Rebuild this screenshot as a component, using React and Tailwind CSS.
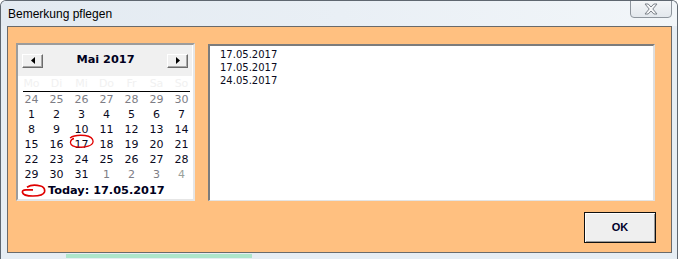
import React from 'react';

const WEEKDAYS = ['Mo', 'Di', 'Mi', 'Do', 'Fr', 'Sa', 'So'];

// 6 weeks shown, May 2017 starts on a Monday (prev month tail 24..30)
const WEEKS = [
  [24, 25, 26, 27, 28, 29, 30].map((d) => ({ d, other: true })),
  [1, 2, 3, 4, 5, 6, 7].map((d) => ({ d })),
  [8, 9, 10, 11, 12, 13, 14].map((d) => ({ d })),
  [15, 16, 17, 18, 19, 20, 21].map((d) => ({ d })),
  [22, 23, 24, 25, 26, 27, 28].map((d) => ({ d })),
  [
    { d: 29 }, { d: 30 }, { d: 31 },
    { d: 1, other: true }, { d: 2, other: true }, { d: 3, other: true }, { d: 4, other: true, light: true },
  ],
];

const ENTRIES = ['17.05.2017', '17.05.2017', '24.05.2017'];

const FONT_UI = { fontFamily: '"Liberation Sans", Arial, sans-serif' };
const FONT_CAL = { fontFamily: '"DejaVu Sans", Verdana, sans-serif' };

function NavButton({ dir }) {
  return (
    <button className="w-[21px] h-[14px] flex items-center justify-center bg-[#f0f0f0] border border-t-white border-l-white border-b-[#6b6b6b] border-r-[#6b6b6b] shadow-[inset_-1px_-1px_0_#a8a8a8]">
      <svg width="4" height="7" viewBox="0 0 4 7">
        {dir === 'left' ? <path d="M4 0 L0 3.5 L4 7 Z" fill="#000" /> : <path d="M0 0 L4 3.5 L0 7 Z" fill="#000" />}
      </svg>
    </button>
  );
}

function Calendar() {
  return (
    <div className="w-[179px] h-[158px] bg-white border-2 border-t-[#9c9c9c] border-l-[#9c9c9c] border-b-[#e6e6e6] border-r-[#e6e6e6] flex flex-col" style={FONT_CAL}>
      <div className="h-[31px] mr-[1px] bg-[#f0f0f0] flex items-center justify-between px-[4px]">
        <NavButton dir="left" />
        <span className="text-[11.3px] font-bold text-[#000020] ml-[1px]">Mai 2017</span>
        <NavButton dir="right" />
      </div>

      <div className="grid grid-cols-7 w-[175px] ml-[1px] h-[15px] items-center text-[11px] text-[#f1f1f1] leading-none">
        {WEEKDAYS.map((w) => (
          <span key={w} className="text-center">{w}</span>
        ))}
      </div>
      <div className="h-px bg-black ml-[5px] mr-[3px]" />

      <div className="flex flex-col w-[175px] ml-[1px]">
        {WEEKS.map((week, i) => (
          <div key={i} className="grid grid-cols-7 h-[15px] items-center text-[11px] leading-none">
            {week.map((c, j) => (
              <span
                key={j}
                className={`relative text-center ${c.light ? 'text-[#9aa09a]' : c.other ? 'text-[#7d7d85]' : 'text-[#0a0a1e]'}`}
              >
                {c.d}
                {!c.other && c.d === 17 && (
                  <svg className="absolute left-[-1px] top-[-5px]" width="27" height="15" viewBox="0 0 27 15">
                    <path
                      d="M2 4 C6 1 12 1 17 1.5 C22 2 25.5 4.5 25 8 C24.5 12 17 13.5 12 13.2 C6 13 2 11.5 2.5 8 C2.8 6 4 5 6 4.5"
                      fill="none"
                      stroke="#e00000"
                      strokeWidth="1.3"
                    />
                  </svg>
                )}
              </span>
            ))}
          </div>
        ))}
      </div>

      <div className="flex items-center h-[17px] pl-[3px] gap-[2px]">
        <svg width="25" height="13" viewBox="0 0 25 13">
          <path
            d="M6 3.2 C9 1.2 15 0.8 19.5 2 C23 3 24 5.5 23.5 8 C22.5 11 17 12 12 12 C6 12 2 11 1.5 8.5 C1.2 7 2 6 5 5.8 L12 5.8"
            fill="none"
            stroke="#e00000"
            strokeWidth="1.7"
          />
        </svg>
        <span className="text-[11.3px] font-bold text-[#000020] leading-none">Today: 17.05.2017</span>
      </div>
    </div>
  );
}

export default function App() {
  return (
    <div className="w-[678px] h-[259px] relative overflow-hidden flex flex-col bg-[#e6edf3] border-t border-l border-r border-[#5f6770] rounded-t-[6px]" style={FONT_UI}>
      {/* title bar */}
      <div className="h-[25px] flex items-center pl-[7px] bg-gradient-to-r from-[#e3eaf1] via-[#e9eff5] to-[#f2f6f9]">
        <span className="text-[12px] text-[#000]">Bemerkung pflegen</span>
      </div>
      <div className="absolute right-[5px] top-[-1px] w-[42px] h-[18px] rounded-b-[4px] border border-[#8e959d] bg-gradient-to-b from-[#f4f6f8] to-[#e3e8ed] flex items-center justify-center">
        <svg width="14" height="12" viewBox="0 0 14 12">
          <path
            d="M1 1 L4.2 1 L7 4 L9.8 1 L13 1 L8.8 6 L13 11 L9.8 11 L7 8 L4.2 11 L1 11 L5.2 6 Z"
            fill="#f6f7f8"
            stroke="#7b8189"
            strokeWidth="1"
            strokeLinejoin="round"
          />
        </svg>
      </div>

      {/* client area */}
      <div className="flex-1 pl-[6px] pr-[5px] pb-[6px]">
        <div className="h-full border border-[#6a6a6a] bg-[#ffc080] flex flex-col pt-[16px] pl-[8px] pr-[16px]">
          <div className="flex items-start gap-[13px]">
            <Calendar />
            <div className="mt-[1px] flex-1 h-[157px] bg-white border-t-2 border-l-2 border-t-[#7c7c7c] border-l-[#7c7c7c] border-b border-r-2 border-b-[#e4e4e4] border-r-[#dedede] pl-[10px] pt-[2px]">
              {ENTRIES.map((e, i) => (
                <div key={i} className="text-[10px] leading-[13px] text-[#0a0a20]" style={FONT_CAL}>
                  {e}
                </div>
              ))}
            </div>
          </div>
          <div className="flex justify-end mt-[11px] mr-[-1px]">
            <button className="w-[72px] h-[31px] border border-[#101010] bg-[#efefef] shadow-[inset_1px_1px_0_#ffffff,inset_-1px_-1px_0_#9a9a9a] flex items-center justify-center">
              <span className="text-[11px] font-bold text-[#00002a]">OK</span>
            </button>
          </div>
        </div>
      </div>

      {/* glass showing desktop below */}
      <div className="absolute bottom-[1px] left-[65px] w-[186px] h-[4px] bg-[#9fe3c1] opacity-80" />
    </div>
  );
}
